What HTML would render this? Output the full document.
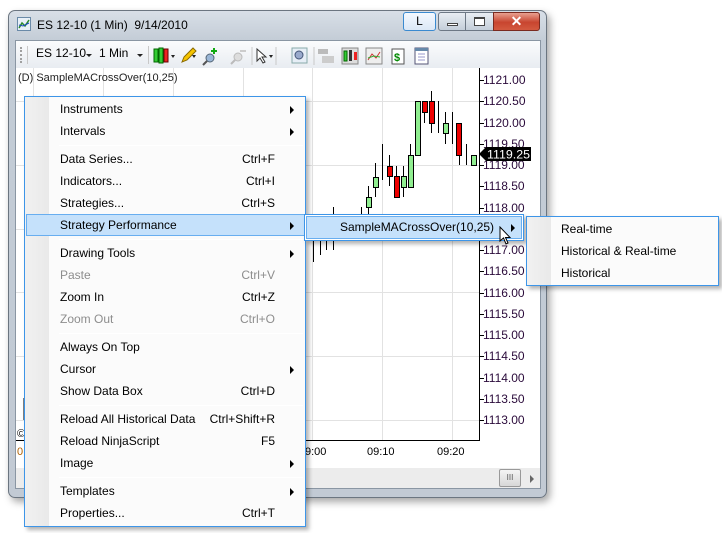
<!DOCTYPE html>
<html><head><meta charset="utf-8">
<style>
*{margin:0;padding:0;box-sizing:border-box}
body{width:722px;height:533px;background:#fff;position:relative;overflow:hidden;font-family:"Liberation Sans",sans-serif;font-size:12px;color:#000}
.abs{position:absolute}
.win{left:8px;top:10px;width:539px;height:488px;border-radius:7px;background:linear-gradient(#d8dfe7,#c3ccd6 30px,#c2cad4);border:1px solid #6b7580;box-shadow:3px 4px 8px rgba(0,0,0,.35)}
.client{left:15px;top:40px;width:526px;height:449px;background:#f0f0f0;border:1px solid #8a96a3}
.tb{left:16px;top:41px;width:524px;height:27px;background:linear-gradient(#fbfcfd,#e8ecf1)}
.chart{left:16px;top:68px;width:524px;height:400px;background:#fff}
.gv{position:absolute;top:68px;height:372px;width:1px;background:#e2e2e2}
.gh{position:absolute;left:16px;width:463px;height:1px;background:#e2e2e2}
.pl{position:absolute;left:483px;font-size:12px;color:#2a0a3a}
.tk{position:absolute;left:479px;width:5px;height:1px;background:#000}
.menu{position:absolute;background:#fbfbfb;border:1px solid #3d95e8;box-shadow:3px 3px 4px rgba(0,0,0,.3)}
.it{position:absolute;left:35px;font-size:12px;white-space:nowrap}
.sc{position:absolute;right:30px;font-size:12px}
.ar{position:absolute;left:265px;width:0;height:0;border-top:4px solid transparent;border-bottom:4px solid transparent;border-left:4px solid #000}
.sep{position:absolute;left:34px;width:244px;height:1px;background:#d8d8d8;border-bottom:1px solid #fff}
.dis{color:#8d8d8d}
.dd{position:absolute;top:54px;border-left:3px solid transparent;border-right:3px solid transparent;border-top:3px solid #222}
</style></head><body>
<div class="abs win"></div>
<svg class="abs" style="left:17px;top:17px" width="14" height="14"><rect x="0.5" y="0.5" width="13" height="13" fill="#e8f0f8" stroke="#6a8aa8"/><polyline points="2,11 5,6 8,9 12,3" fill="none" stroke="#2a8a2a" stroke-width="1.5"/><polyline points="2,8 6,9 12,6" fill="none" stroke="#1a4ac0"/></svg>
<div class="abs" style="left:37px;top:18px;font-size:12px">ES 12-10 (1 Min)&nbsp; 9/14/2010</div>
<div class="abs" style="left:403px;top:12px;width:33px;height:19px;border:1px solid #3a8ad0;border-radius:3px;background:linear-gradient(#f4f9ff,#dbe8f6);text-align:center;font-size:12px;line-height:17px">L</div>
<div class="abs" style="left:438px;top:12px;width:28px;height:19px;border:1px solid #6d7885;border-radius:3px 0 0 3px;background:linear-gradient(#e8edf3,#c4ced9)"><div class="abs" style="left:8px;top:10px;width:11px;height:3px;border:1px solid #444;background:#fff"></div></div>
<div class="abs" style="left:465px;top:12px;width:29px;height:19px;border:1px solid #6d7885;background:linear-gradient(#e8edf3,#c4ced9)"><div class="abs" style="left:8px;top:4px;width:11px;height:9px;border:1px solid #444;border-top-width:2px;background:#fff"></div></div>
<div class="abs" style="left:493px;top:12px;width:47px;height:19px;border:1px solid #7a2a20;border-radius:0 3px 3px 0;background:linear-gradient(#e8a090,#c8452f 55%,#d35a40);color:#fff;font-weight:bold;text-align:center;font-size:14px;line-height:17px">✕</div>
<div class="abs client"></div>
<div class="abs tb"></div>
<div class="abs" style="left:20px;top:47px;width:2px;height:16px;border-left:2px dotted #a0a0a0"></div>
<div class="abs" style="left:27px;top:46px;width:1px;height:18px;background:#c8c8c8"></div>
<div class="abs" style="left:36px;top:46px;font-size:12px">ES 12-10</div><div class="dd" style="left:86px"></div>
<div class="abs" style="left:99px;top:46px;font-size:12px">1 Min</div><div class="dd" style="left:137px"></div>
<div class="abs" style="left:148px;top:46px;width:1px;height:18px;background:#c8c8c8"></div>
<svg class="abs" style="left:152px;top:46px" width="280" height="20">
<rect x="2" y="3" width="4" height="13" fill="#3c3" stroke="#060"/><rect x="7" y="2" width="4" height="15" fill="#3c3" stroke="#060"/><rect x="12" y="3" width="4" height="13" fill="#e22" stroke="#600"/>
<path d="M19 9 l4 0 l-2 3z" fill="#222"/>
<path d="M30 16 l2-5 l9-9 l3 3 l-9 9z" fill="#f5c400" stroke="#8a6a00"/><path d="M40 9 l4 0 l-2 3z" fill="#222"/>
<circle cx="58" cy="12" r="4" fill="#9ab6d6" stroke="#567"/><path d="M55 15 l-4 4" stroke="#555" stroke-width="2"/><path d="M62 2v6M59 5h6" stroke="#1a1" stroke-width="2"/>
<circle cx="86" cy="11" r="4" fill="#ddd" stroke="#bbb"/><path d="M83 14 l-4 4" stroke="#bbb" stroke-width="2"/><path d="M88 5h6" stroke="#ccc" stroke-width="2"/>
<line x1="100" y1="1" x2="100" y2="19" stroke="#c8c8c8"/>
<path d="M105 3 l0 12 l3-3 l3 5 l2-1 l-3-5 l4 0z" fill="#fff" stroke="#333"/><path d="M117 9 l4 0 l-2 3z" fill="#222"/>
<line x1="124" y1="1" x2="124" y2="19" stroke="#c8c8c8"/>
<rect x="140" y="2" width="15" height="15" fill="#e6eef6" stroke="#8aa"/><circle cx="147" cy="9" r="4" fill="#9ac" stroke="#457"/>
<line x1="162" y1="1" x2="162" y2="19" stroke="#c8c8c8"/>
<rect x="166" y="3" width="10" height="5" fill="#bbb"/><rect x="170" y="10" width="12" height="7" fill="#ccc"/>
<rect x="190" y="2" width="16" height="16" fill="#ddd" stroke="#888"/><rect x="192" y="5" width="3" height="10" fill="#3c3" stroke="#060"/><rect x="197" y="4" width="3" height="11" fill="#333"/><rect x="202" y="6" width="3" height="8" fill="#e22"/>
<rect x="214" y="2" width="16" height="16" fill="#eee" stroke="#888"/><polyline points="216,14 220,8 224,12 228,6" fill="none" stroke="#c33"/><polyline points="216,12 222,10 228,11" fill="none" stroke="#3a3"/>
<rect x="240" y="3" width="12" height="15" fill="#fff" stroke="#555"/><text x="242" y="15" font-size="11" font-weight="bold" fill="#080" font-family="Liberation Sans">$</text>
<rect x="263" y="2" width="13" height="16" fill="#fff" stroke="#557"/><rect x="263" y="2" width="13" height="3" fill="#68a"/><path d="M266 8h7M266 11h7M266 14h7" stroke="#99c"/>
</svg>
<div class="abs chart"></div>
<div class="gv" style="left:33px"></div><div class="gv" style="left:103px"></div><div class="gv" style="left:173px"></div><div class="gv" style="left:243px"></div><div class="gv" style="left:312px"></div><div class="gv" style="left:382px"></div><div class="gv" style="left:452px"></div>
<div class="gh" style="top:101px"></div><div class="gh" style="top:165px"></div><div class="gh" style="top:229px"></div><div class="gh" style="top:292px"></div><div class="gh" style="top:356px"></div><div class="gh" style="top:420px"></div>
<div class="abs" style="left:479px;top:68px;width:1px;height:373px;background:#000"></div>
<div class="abs" style="left:16px;top:440px;width:464px;height:1px;background:#000"></div>
<div class="abs" style="left:18px;top:72px;font-size:11px;color:#222">(D) SampleMACrossOver(10,25)</div>
<div class="tk" style="top:80px"></div><div class="pl" style="top:73px">1121.00</div>
<div class="tk" style="top:101px"></div><div class="pl" style="top:94px">1120.50</div>
<div class="tk" style="top:123px"></div><div class="pl" style="top:116px">1120.00</div>
<div class="tk" style="top:144px"></div><div class="pl" style="top:137px">1119.50</div>
<div class="tk" style="top:165px"></div><div class="pl" style="top:158px">1119.00</div>
<div class="tk" style="top:186px"></div><div class="pl" style="top:179px">1118.50</div>
<div class="tk" style="top:208px"></div><div class="pl" style="top:201px">1118.00</div>
<div class="tk" style="top:250px"></div><div class="pl" style="top:243px">1117.00</div>
<div class="tk" style="top:271px"></div><div class="pl" style="top:264px">1116.50</div>
<div class="tk" style="top:293px"></div><div class="pl" style="top:286px">1116.00</div>
<div class="tk" style="top:314px"></div><div class="pl" style="top:307px">1115.50</div>
<div class="tk" style="top:335px"></div><div class="pl" style="top:328px">1115.00</div>
<div class="tk" style="top:356px"></div><div class="pl" style="top:349px">1114.50</div>
<div class="tk" style="top:378px"></div><div class="pl" style="top:371px">1114.00</div>
<div class="tk" style="top:399px"></div><div class="pl" style="top:392px">1113.50</div>
<div class="tk" style="top:420px"></div><div class="pl" style="top:413px">1113.00</div>
<svg class="abs" style="left:479px;top:146px" width="52" height="16"><path d="M0 8 L7 1 H52 V15 H7z" fill="#000"/><text x="8" y="12.5" fill="#fff" font-size="12" font-family="Liberation Sans" textLength="43" lengthAdjust="spacingAndGlyphs">1119.25</text></svg>
<svg class="abs" style="left:0;top:0" width="480" height="440">
<g stroke="#000" stroke-width="1">
<line x1="313.5" y1="240" x2="313.5" y2="262"/><line x1="320.5" y1="240" x2="320.5" y2="255"/><line x1="326.5" y1="240" x2="326.5" y2="250"/><line x1="333.5" y1="207" x2="333.5" y2="250"/>
<line x1="361.5" y1="207" x2="361.5" y2="214"/>
<line x1="368.5" y1="186" x2="368.5" y2="214"/><line x1="375.5" y1="163" x2="375.5" y2="197"/><line x1="382.5" y1="144" x2="382.5" y2="180"/><line x1="389.5" y1="155" x2="389.5" y2="186"/><line x1="396.5" y1="166" x2="396.5" y2="197"/><line x1="403.5" y1="166" x2="403.5" y2="197"/><line x1="410.5" y1="144" x2="410.5" y2="187"/><line x1="424.5" y1="101" x2="424.5" y2="123"/><line x1="431.5" y1="91" x2="431.5" y2="133"/><line x1="438.5" y1="101" x2="438.5" y2="133"/><line x1="445.5" y1="112" x2="445.5" y2="144"/><line x1="452.5" y1="112" x2="452.5" y2="144"/><line x1="459.5" y1="123" x2="459.5" y2="165"/><line x1="466.5" y1="144" x2="466.5" y2="165"/>
</g>
<g stroke="#000">
<rect x="366.5" y="197.5" width="5" height="10" fill="#90ee90"/>
<rect x="373.5" y="177.5" width="5" height="10" fill="#90ee90"/>
<rect x="387.5" y="166.5" width="5" height="10" fill="#e00"/>
<rect x="394.5" y="176.5" width="5" height="21" fill="#e00"/>
<rect x="401.5" y="176.5" width="5" height="11" fill="#90ee90"/>
<rect x="408.5" y="155.5" width="5" height="32" fill="#90ee90"/>
<rect x="415.5" y="101.5" width="5" height="54" fill="#90ee90"/>
<rect x="422.5" y="101.5" width="5" height="11" fill="#e00"/>
<rect x="429.5" y="101.5" width="5" height="22" fill="#e00"/>
<rect x="443.5" y="123.5" width="5" height="10" fill="#90ee90"/>
<rect x="456.5" y="123.5" width="5" height="32" fill="#e00"/>
<rect x="471.5" y="155.5" width="5" height="10" fill="#90ee90"/>
</g>
<line x1="24.5" y1="398" x2="24.5" y2="420" stroke="#000" stroke-width="2"/>
</svg>
<div class="abs" style="left:17px;top:428px;font-size:11px">©</div>
<div class="abs" style="left:17px;top:446px;font-size:11px;color:#b06000">0</div>
<div class="abs" style="left:305px;top:446px;font-size:11px">9:00</div>
<div class="abs" style="left:367px;top:446px;font-size:11px">09:10</div>
<div class="abs" style="left:437px;top:446px;font-size:11px">09:20</div>
<div class="abs" style="left:16px;top:468px;width:524px;height:20px;background:#ececec"></div>
<div class="abs" style="left:499px;top:469px;width:22px;height:18px;border:1px solid #999;border-radius:2px;background:linear-gradient(#f4f4f4,#d8d8d8);font-size:8px;text-align:center;line-height:16px;color:#555">III</div>
<div class="abs" style="left:530px;top:475px;border-top:4px solid transparent;border-bottom:4px solid transparent;border-left:4px solid #666"></div>
<div class="menu" style="left:24px;top:96px;width:282px;height:431px">
<div class="abs" style="left:0;top:0;width:24px;height:429px;background:linear-gradient(90deg,#f1f1f1,#e9e9e9)"></div>
<div class="abs" style="left:1px;top:117px;width:279px;height:22px;background:#c5e1fb;border:1px solid #68aef0"></div>
<div class="it" style="top:5px">Instruments</div><div class="ar" style="top:9px"></div>
<div class="it" style="top:27px">Intervals</div><div class="ar" style="top:31px"></div>
<div class="sep" style="top:48px"></div>
<div class="it" style="top:55px">Data Series...</div><div class="sc" style="top:55px">Ctrl+F</div>
<div class="it" style="top:77px">Indicators...</div><div class="sc" style="top:77px">Ctrl+I</div>
<div class="it" style="top:99px">Strategies...</div><div class="sc" style="top:99px">Ctrl+S</div>
<div class="it" style="top:121px">Strategy Performance</div><div class="ar" style="top:125px"></div>
<div class="sep" style="top:142px"></div>
<div class="it" style="top:149px">Drawing Tools</div><div class="ar" style="top:153px"></div>
<div class="it dis" style="top:171px">Paste</div><div class="sc dis" style="top:171px">Ctrl+V</div>
<div class="it" style="top:193px">Zoom In</div><div class="sc" style="top:193px">Ctrl+Z</div>
<div class="it dis" style="top:215px">Zoom Out</div><div class="sc dis" style="top:215px">Ctrl+O</div>
<div class="sep" style="top:236px"></div>
<div class="it" style="top:243px">Always On Top</div>
<div class="it" style="top:265px">Cursor</div><div class="ar" style="top:269px"></div>
<div class="it" style="top:287px">Show Data Box</div><div class="sc" style="top:287px">Ctrl+D</div>
<div class="sep" style="top:308px"></div>
<div class="it" style="top:315px">Reload All Historical Data</div><div class="sc" style="top:315px">Ctrl+Shift+R</div>
<div class="it" style="top:337px">Reload NinjaScript</div><div class="sc" style="top:337px">F5</div>
<div class="it" style="top:359px">Image</div><div class="ar" style="top:363px"></div>
<div class="sep" style="top:380px"></div>
<div class="it" style="top:387px">Templates</div><div class="ar" style="top:391px"></div>
<div class="it" style="top:409px">Properties...</div><div class="sc" style="top:409px">Ctrl+T</div>
</div>
<div class="menu" style="left:304px;top:214px;width:220px;height:27px;background:#fff">
<div class="abs" style="left:1px;top:1px;width:216px;height:23px;background:#c5e1fb;border:1px solid #68aef0"></div>
<div class="abs" style="left:35px;top:5px;font-size:12px">SampleMACrossOver(10,25)</div>
<div class="abs" style="left:206px;top:9px;border-top:4px solid transparent;border-bottom:4px solid transparent;border-left:4px solid #000"></div>
</div>
<svg class="abs" style="left:499px;top:226px" width="14" height="20"><path d="M1 1 V15 L4.5 12 L7 18 L9 17 L6.5 11.5 H11z" fill="#fff" stroke="#000"/></svg>
<div class="menu" style="left:526px;top:216px;width:193px;height:70px">
<div class="abs" style="left:0;top:0;width:24px;height:68px;background:linear-gradient(90deg,#f1f1f1,#e9e9e9)"></div>
<div class="abs" style="left:34px;top:5px;font-size:12px">Real-time</div>
<div class="abs" style="left:34px;top:27px;font-size:12px">Historical &amp; Real-time</div>
<div class="abs" style="left:34px;top:49px;font-size:12px">Historical</div>
</div>
</body></html>
